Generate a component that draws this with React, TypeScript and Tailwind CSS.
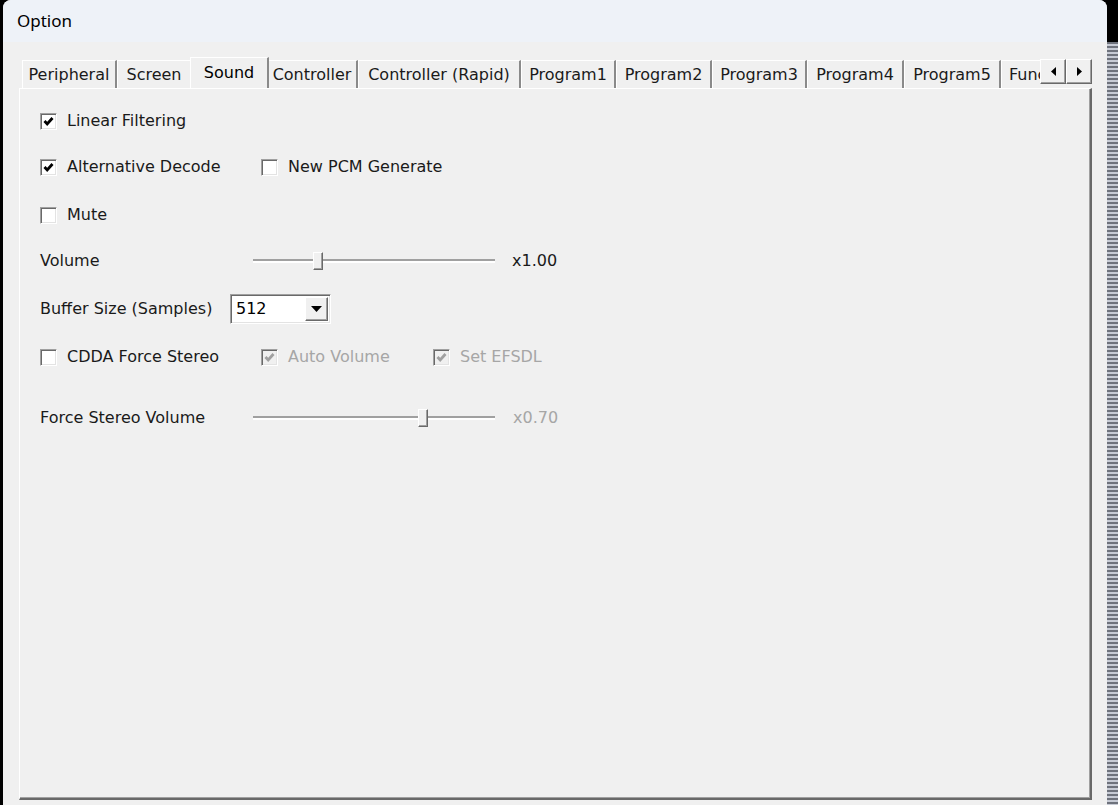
import React from "react";

const FONT = "font-['DejaVu_Sans',sans-serif]";

const CheckBox = ({ checked, disabled }: { checked?: boolean; disabled?: boolean }) => (
  <span
    className={`flex h-[17px] w-[17px] shrink-0 items-center justify-center border border-t-[#a0a0a0] border-l-[#a0a0a0] border-r-white border-b-white shadow-[inset_1px_1px_0_#696969,inset_-1px_-1px_0_#e3e3e3] ${
      disabled ? "bg-[#f0f0f0]" : "bg-white"
    }`}
  >
    {checked && (
      <svg width="11" height="11" viewBox="0 0 11 11">
        <polyline
          points="1.5,5 4.2,8 9.5,2"
          fill="none"
          stroke={disabled ? "#a0a0a0" : "#000"}
          strokeWidth="2.8"
        />
      </svg>
    )}
  </span>
);

const Option = ({
  label,
  checked,
  disabled,
  width,
}: {
  label: string;
  checked?: boolean;
  disabled?: boolean;
  width?: string;
}) => (
  <label className={`flex items-center gap-[10px] ${width ?? ""}`}>
    <CheckBox checked={checked} disabled={disabled} />
    <span className={disabled ? "text-[#a6a6a6]" : "text-[#1a1a1a]"}>{label}</span>
  </label>
);

// track + thumb, pos is the thumb's left offset in px
const Slider = ({ pos }: { pos: number }) => (
  <div className="relative h-[18px] w-[242px]">
    <div className="absolute left-0 right-0 top-[7px] h-[4px] border-t-2 border-t-[#a0a0a0] border-b-2 border-b-white" />
    <div
      className="absolute top-0 h-[18px] w-[10px] border border-t-white border-l-white border-r-[#696969] border-b-[#696969] bg-[#f0f0f0] shadow-[inset_-1px_-1px_0_#a0a0a0]"
      style={{ left: pos }}
    />
  </div>
);

const tabs = [
  { name: "Peripheral", w: "w-[95px] justify-center" },
  { name: "Screen", w: "w-[75px] justify-center" },
  { name: "Sound", w: "w-[75px]", active: true },
  { name: "Controller", w: "w-[91px] justify-center" },
  { name: "Controller (Rapid)", w: "w-[163px] justify-center" },
  { name: "Program1", w: "w-[95px] justify-center" },
  { name: "Program2", w: "w-[96px] justify-center" },
  { name: "Program3", w: "w-[95px] justify-center" },
  { name: "Program4", w: "w-[97px] justify-center" },
  { name: "Program5", w: "w-[97px] justify-center" },
  { name: "Function", w: "w-[95px] pl-[7px]" },
];

export default function App() {
  return (
    <div className={`flex h-[805px] w-[1118px] overflow-hidden bg-black text-[16px] ${FONT}`}>
      {/* left edge */}
      <div className="w-[3px] shrink-0 bg-black" />

      {/* window */}
      <div className="flex w-[1104px] shrink-0 flex-col overflow-hidden rounded-t-[8px] bg-[#f0f0f0]">
        {/* title bar */}
        <div className="flex h-[42px] shrink-0 items-center bg-[#eef2f8] px-[14px] font-['Noto_Sans',sans-serif] text-[17px] text-black">
          Option
        </div>

        <div className="flex flex-1 flex-col pl-[16px] pt-[15px]">
          {/* tab strip */}
          <div className="relative z-10 flex h-[31px] w-[1073px]">
            <div className="flex flex-1 items-end overflow-hidden pl-[3px]">
              {tabs.map((t) =>
                t.active ? (
                  <div
                    key={t.name}
                    className="relative -mx-[2px] -mb-[2px] flex h-[33px] w-[79px] shrink-0 justify-center border-l border-t border-r-2 border-white border-r-[#8a8a8a] bg-[#f0f0f0] pt-[3px] text-black"
                  >
                    {t.name}
                  </div>
                ) : (
                  <div
                    key={t.name}
                    className={`flex h-[28px] shrink-0 items-center whitespace-nowrap border-l border-t border-r-2 border-white border-r-[#8a8a8a] text-[#1a1a1a] ${t.w}`}
                  >
                    {t.name}
                  </div>
                )
              )}
            </div>
            {/* scroll arrows */}
            <div className="mb-[4px] flex self-end">
              {["M6 1 L1 5.5 L6 10 Z", "M1 1 L6 5.5 L1 10 Z"].map((d) => (
                <div
                  key={d}
                  className="flex h-[25px] w-[26px] items-center justify-center border border-t-white border-l-white border-r-[#696969] border-b-[#696969] bg-[#f0f0f0] shadow-[inset_-1px_-1px_0_#a0a0a0]"
                >
                  <svg width="7" height="11" viewBox="0 0 7 11">
                    <path d={d} fill="#000" />
                  </svg>
                </div>
              ))}
            </div>
          </div>

          {/* tab panel */}
          <div className="flex h-[712px] w-[1073px] flex-col border-l border-t border-r-2 border-b-2 border-white border-r-[#696969] border-b-[#696969] pl-[20px] pt-[20px] shadow-[inset_-1px_-1px_0_#a0a0a0]">
            <div className="flex h-6 items-center">
              <Option label="Linear Filtering" checked />
            </div>

            <div className="mt-[22px] flex h-6 items-center">
              <Option label="Alternative Decode" checked width="w-[221px]" />
              <Option label="New PCM Generate" />
            </div>

            <div className="mt-[24px] flex h-6 items-center">
              <Option label="Mute" />
            </div>

            <div className="mt-[22px] flex h-6 items-center">
              <span className="w-[213px] text-[#1a1a1a]">Volume</span>
              <Slider pos={60} />
              <span className="ml-[17px] text-[#1a1a1a]">x1.00</span>
            </div>

            <div className="mt-[21px] flex h-[30px] items-center">
              <span className="w-[190px] text-[#1a1a1a]">Buffer Size (Samples)</span>
              <div className="flex h-[30px] w-[101px] items-center border border-t-[#a0a0a0] border-l-[#a0a0a0] border-r-white border-b-white bg-white pl-[5px] pr-[2px] shadow-[inset_1px_1px_0_#696969,inset_-1px_-1px_0_#e3e3e3]">
                <span className="flex-1 text-black">512</span>
                <div className="flex h-[24px] w-[23px] items-center justify-center border border-t-white border-l-white border-r-[#696969] border-b-[#696969] bg-[#f0f0f0] shadow-[inset_-1px_-1px_0_#a0a0a0]">
                  <svg width="11" height="6" viewBox="0 0 11 6">
                    <path d="M0 0 L11 0 L5.5 6 Z" fill="#000" />
                  </svg>
                </div>
              </div>
            </div>

            <div className="mt-[21px] flex h-6 items-center">
              <Option label="CDDA Force Stereo" width="w-[221px]" />
              <Option label="Auto Volume" checked disabled width="w-[172px]" />
              <Option label="Set EFSDL" checked disabled />
            </div>

            <div className="mt-[37px] flex h-6 items-center">
              <span className="w-[213px] text-[#1a1a1a]">Force Stereo Volume</span>
              <Slider pos={165} />
              <span className="ml-[18px] text-[#a6a6a6]">x0.70</span>
            </div>
          </div>
        </div>
      </div>

      {/* right edge: background behind the window */}
      <div className="flex w-[11px] shrink-0 flex-col">
        <div className="h-[42px] bg-black" />
        <div className="flex-1 bg-[repeating-linear-gradient(180deg,#6e727c_0px,#6e727c_2px,#c7cbd5_2px,#c7cbd5_4px)]" />
      </div>
    </div>
  );
}
